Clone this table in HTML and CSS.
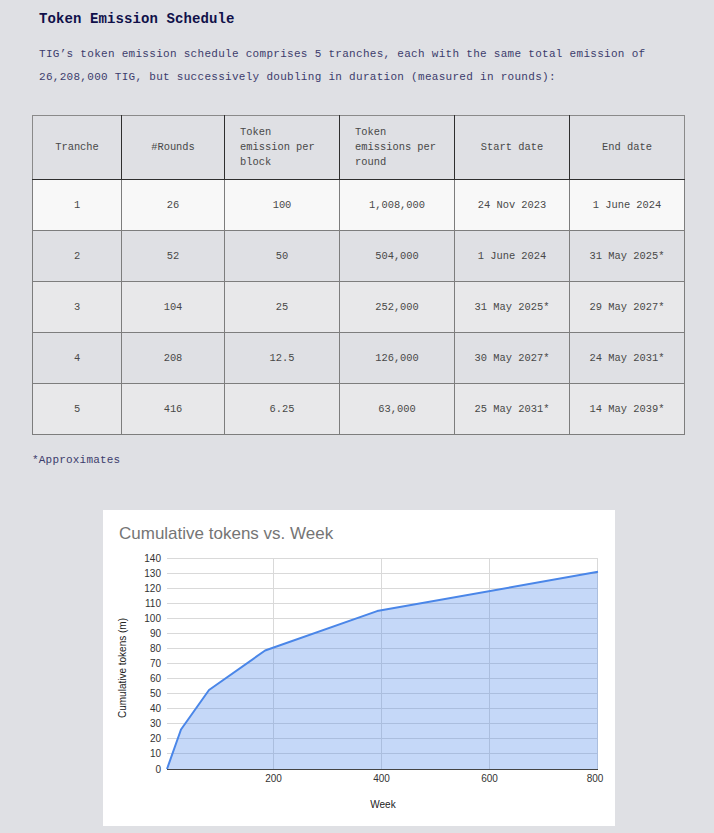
FILE: index.html
```html
<!DOCTYPE html>
<html>
<head>
<meta charset="utf-8">
<link rel="stylesheet" href="styles.css">
</head>
<body>
<div class="page">
  <h1 class="title">Token Emission Schedule</h1>
  <p class="intro">TIG’s token emission schedule comprises 5 tranches, each with the same total emission of 26,208,000 TIG, but successively doubling in duration (measured in rounds):</p>
  <table class="sched">
    <colgroup>
      <col class="c1"><col class="c2"><col class="c3"><col class="c3"><col class="c3"><col class="c3">
    </colgroup>
    <thead>
      <tr>
        <th>Tranche</th>
        <th>#Rounds</th>
        <th class="left">Token emission per block</th>
        <th class="left">Token emissions per round</th>
        <th>Start date</th>
        <th>End date</th>
      </tr>
    </thead>
    <tbody>
      <tr class="r1"><td>1</td><td>26</td><td>100</td><td>1,008,000</td><td>24 Nov 2023</td><td>1 June 2024</td></tr>
      <tr class="r2"><td>2</td><td>52</td><td>50</td><td>504,000</td><td>1 June 2024</td><td>31 May 2025*</td></tr>
      <tr class="r3"><td>3</td><td>104</td><td>25</td><td>252,000</td><td>31 May 2025*</td><td>29 May 2027*</td></tr>
      <tr class="r2"><td>4</td><td>208</td><td>12.5</td><td>126,000</td><td>30 May 2027*</td><td>24 May 2031*</td></tr>
      <tr class="r3"><td>5</td><td>416</td><td>6.25</td><td>63,000</td><td>25 May 2031*</td><td>14 May 2039*</td></tr>
    </tbody>
  </table>
  <p class="note">*Approximates</p>
  <div class="chart-wrap">
    <svg class="chart" width="512" height="316" viewBox="0 0 512 316" xmlns="http://www.w3.org/2000/svg">
      <rect x="0" y="0" width="512" height="316" fill="#ffffff"/>
      <text x="16" y="29" class="ch-title">Cumulative tokens vs. Week</text>
      <g stroke="#d9d9d9" stroke-width="1">
        <line x1="64" x2="495" y1="48.5" y2="48.5"/>
        <line x1="64" x2="495" y1="63.5" y2="63.5"/>
        <line x1="64" x2="495" y1="78.5" y2="78.5"/>
        <line x1="64" x2="495" y1="93.5" y2="93.5"/>
        <line x1="64" x2="495" y1="108.5" y2="108.5"/>
        <line x1="64" x2="495" y1="123.5" y2="123.5"/>
        <line x1="64" x2="495" y1="138.5" y2="138.5"/>
        <line x1="64" x2="495" y1="153.5" y2="153.5"/>
        <line x1="64" x2="495" y1="168.5" y2="168.5"/>
        <line x1="64" x2="495" y1="183.5" y2="183.5"/>
        <line x1="64" x2="495" y1="198.5" y2="198.5"/>
        <line x1="64" x2="495" y1="213.5" y2="213.5"/>
        <line x1="64" x2="495" y1="228.5" y2="228.5"/>
        <line x1="64" x2="495" y1="243.5" y2="243.5"/>
        <line x1="170.5" x2="170.5" y1="48" y2="259"/>
        <line x1="278.5" x2="278.5" y1="48" y2="259"/>
        <line x1="386.5" x2="386.5" y1="48" y2="259"/>
        <line x1="494.5" x2="494.5" y1="48" y2="259"/>
      </g>
      <polygon points="64,259 78,219.5 106,180 162.1,140.5 274.1,101.1 495,61.7 495,259" fill="rgba(74,134,232,0.32)"/>
      <polyline points="64,259 78,219.5 106,180 162.1,140.5 274.1,101.1 495,61.7" fill="none" stroke="#4a86e8" stroke-width="2" stroke-linejoin="round"/>
      <line x1="64" x2="495" y1="259.5" y2="259.5" stroke="#444" stroke-width="1.2"/>
      <g class="ylab">
        <text x="58" y="52">140</text>
        <text x="58" y="67">130</text>
        <text x="58" y="82">120</text>
        <text x="58" y="97">110</text>
        <text x="58" y="112">100</text>
        <text x="58" y="127">90</text>
        <text x="58" y="142">80</text>
        <text x="58" y="157">70</text>
        <text x="58" y="172">60</text>
        <text x="58" y="187">50</text>
        <text x="58" y="202">40</text>
        <text x="58" y="217">30</text>
        <text x="58" y="232">20</text>
        <text x="58" y="247">10</text>
        <text x="58" y="263">0</text>
      </g>
      <g class="xlab">
        <text x="170.5" y="272">200</text>
        <text x="278.5" y="272">400</text>
        <text x="386.5" y="272">600</text>
        <text x="492" y="272">800</text>
      </g>
      <text x="280" y="298" class="axis-t">Week</text>
      <text x="0" y="0" class="axis-t" transform="translate(23 158) rotate(-90)">Cumulative tokens (m)</text>
    </svg>
  </div>
</div>
</body>
</html>
```

FILE: styles.css
```css
html, body {
  margin: 0;
  padding: 0;
  background: #dfe0e4;
}

.page {
  padding: 10px 30px 0 32px;
  font-family: "Liberation Mono", "DejaVu Sans Mono", monospace;
}

.title {
  margin: 0 0 0 7px;
  font-size: 14px;
  font-weight: bold;
  color: #10104a;
  line-height: 18px;
  letter-spacing: 0.1px;
}

.intro {
  margin: 15px 0 0 7px;
  font-size: 11px;
  letter-spacing: 0.29px;
  line-height: 23px;
  color: #3c3c6c;
}

.sched {
  margin-top: 26px;
  width: 652px;
  border-collapse: collapse;
  table-layout: fixed;
  font-size: 10.4px;
  color: #484848;
}

.c1 { width: 89px; }
.c2 { width: 103px; }
.c3 { width: 115px; }

.sched th,
.sched td {
  border: 1px solid #7d7d7d;
  text-align: center;
  vertical-align: middle;
  padding: 0 15px;
  font-weight: normal;
}

.sched th {
  height: 63px;
  line-height: 15px;
  background: #dfe0e4;
  border-top-color: #8a8a8a;
  border-left-color: #2e2e2e;
  border-right-color: #2e2e2e;
  border-bottom-color: #2e2e2e;
}

.sched th:first-child { border-left-color: #8a8a8a; }
.sched th:last-child { border-right-color: #8a8a8a; }

.sched th.left { text-align: left; }

.sched td {
  height: 50px;
}

.r1 td { background: #f8f8f8; }
.r2 td { background: #dfe0e4; }
.r3 td { background: #e8e8ea; }

.note {
  margin: 19px 0 0 0;
  font-size: 11px;
  color: #3c3c6c;
  letter-spacing: 0.2px;
}

.chart-wrap {
  display: flex;
  justify-content: center;
  margin-top: 44px;
  padding: 0 0 7px 2px;
}

.chart {
  display: block;
  font-family: "Liberation Sans", Arial, sans-serif;
}

.ch-title {
  font-size: 17px;
  fill: #757575;
}

.ylab text {
  font-size: 10px;
  fill: #333;
  text-anchor: end;
}

.xlab text {
  font-size: 10px;
  fill: #333;
  text-anchor: middle;
}

.axis-t {
  font-size: 10px;
  fill: #222;
  text-anchor: middle;
}
```
